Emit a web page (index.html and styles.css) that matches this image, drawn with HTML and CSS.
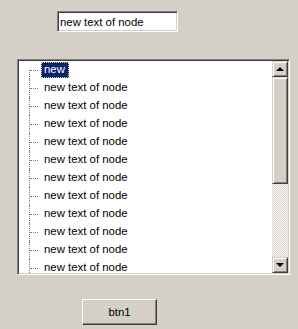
FILE: index.html
```html
<!DOCTYPE html>
<html lang="en">
<head>
  <meta charset="UTF-8">
  <title>Tree demo</title>
  <link rel="stylesheet" href="styles.css">
</head>
<body>
  <div class="top">
    <input type="text" class="edit" value="new text of node">
  </div>

  <div class="tree">
    <ul class="nodes">
      <li class="node first"><span class="label selected">new</span></li>
      <li class="node"><span class="label">new text of node</span></li>
      <li class="node"><span class="label">new text of node</span></li>
      <li class="node"><span class="label">new text of node</span></li>
      <li class="node"><span class="label">new text of node</span></li>
      <li class="node"><span class="label">new text of node</span></li>
      <li class="node"><span class="label">new text of node</span></li>
      <li class="node"><span class="label">new text of node</span></li>
      <li class="node"><span class="label">new text of node</span></li>
      <li class="node"><span class="label">new text of node</span></li>
      <li class="node"><span class="label">new text of node</span></li>
      <li class="node last"><span class="label">new text of node</span></li>
    </ul>
    <div class="scrollbar">
      <div class="sb-btn"><span class="arrow up"></span></div>
      <div class="sb-track">
        <div class="sb-thumb"></div>
      </div>
      <div class="sb-btn"><span class="arrow down"></span></div>
    </div>
  </div>

  <div class="bottom">
    <button class="btn">btn1</button>
  </div>
</body>
</html>
```

FILE: styles.css
```css
body {
  margin: 0;
  background-color: #d4d0c8;
  font-family: "Liberation Sans", Arial, sans-serif;
  font-size: 11.4px;
  color: #000;
}
.top {
  padding: 11px 0 0 57px;
}
.edit {
  display: block;
  box-sizing: border-box;
  width: 121px;
  height: 21px;
  margin: 0;
  padding: 1px 1px 0 2px;
  font: inherit;
  color: #000;
  background: #fff;
  border-style: solid;
  border-width: 1px;
  border-color: #808080 #fff #fff #808080;
  box-shadow: inset 1px 1px 0 #404040, inset -1px -1px 0 #d4d0c8;
  outline: none;
}
.tree {
  display: flex;
  box-sizing: border-box;
  width: 273px;
  height: 216px;
  margin: 27px 0 0 17px;
  background: #fff;
  border-style: solid;
  border-width: 1px;
  border-color: #808080 #fff #fff #808080;
  box-shadow: inset 1px 1px 0 #404040, inset -1px -1px 0 #d4d0c8;
  padding: 1px;
  overflow: hidden;
}
.nodes {
  flex: 1;
  list-style: none;
  margin: 0;
  padding: 0;
  overflow: hidden;
}
.node {
  position: relative;
  height: 18px;
  display: flex;
  align-items: center;
  padding-left: 22px;
}
.node::before {
  content: "";
  position: absolute;
  left: 10px;
  top: 0;
  bottom: 0;
  border-left: 1px dotted #808080;
}
.node.first::before {
  top: 9px;
}
.node.last::before {
  bottom: -10px;
}
.node::after {
  content: "";
  position: absolute;
  left: 11px;
  top: 9px;
  width: 8px;
  border-top: 1px dotted #808080;
}
.label {
  padding: 1px 2px 2px 3px;
  line-height: 13px;
  white-space: nowrap;
}
.selected {
  background: #0a246a;
  color: #fff;
  outline: 1px dotted #d4d0c8;
  outline-offset: -1px;
  padding-right: 4px;
}
.scrollbar {
  width: 16px;
  display: flex;
  flex-direction: column;
}
.sb-btn, .sb-thumb {
  box-sizing: border-box;
  background: #d4d0c8;
  border-style: solid;
  border-width: 1px;
  border-color: #d4d0c8 #404040 #404040 #d4d0c8;
  box-shadow: inset 1px 1px 0 #fff, inset -1px -1px 0 #808080;
}
.sb-btn {
  height: 16px;
  display: flex;
  align-items: center;
  justify-content: center;
}
.sb-track {
  flex: 1;
  background: repeating-conic-gradient(#d4d0c8 0 25%, #fff 0 50%) 0 0 / 2px 2px;
}
.sb-thumb {
  height: 107px;
}
.arrow {
  width: 0;
  height: 0;
  border-left: 4px solid transparent;
  border-right: 4px solid transparent;
}
.arrow.up {
  border-bottom: 4px solid #000;
}
.arrow.down {
  border-top: 4px solid #000;
}
.bottom {
  padding: 24px 0 0 82px;
}
.btn {
  box-sizing: border-box;
  width: 75px;
  height: 26px;
  padding: 0;
  font: inherit;
  color: #000;
  background: #d4d0c8;
  border-style: solid;
  border-width: 1px;
  border-color: #fff #404040 #404040 #fff;
  box-shadow: inset -1px -1px 0 #808080;
}
```
